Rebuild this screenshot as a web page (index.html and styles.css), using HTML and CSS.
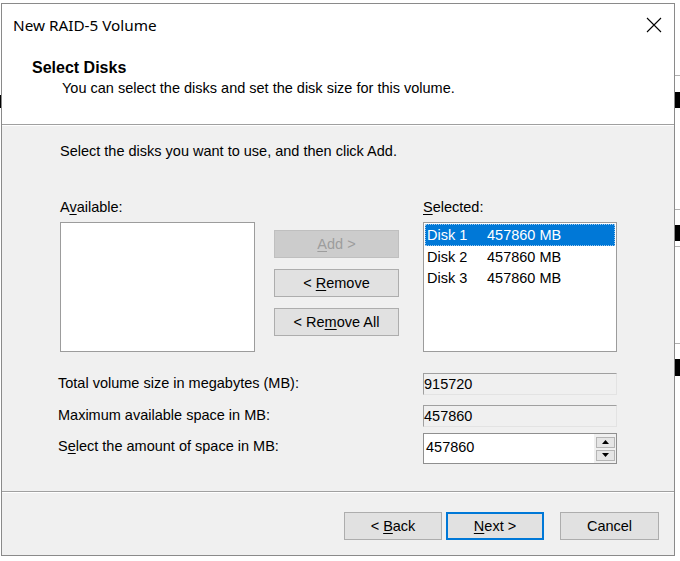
FILE: index.html
```html
<!DOCTYPE html>
<html>
<head>
<meta charset="utf-8">
<link rel="stylesheet" href="styles.css">
</head>
<body>
<div class="backdrop">
  <span class="mark mark-l1"></span>
  <span class="mark mark-r1"></span>
  <span class="mark mark-r2"></span>
  <span class="mark mark-r3"></span>
  <span class="rule rule-r1"></span>
  <span class="rule rule-r2"></span>
  <span class="rule rule-r3"></span>
  <span class="rule rule-r4"></span>
</div>
<div class="window">
  <div class="titlebar">
    <span class="title">New RAID-5 Volume</span>
    <span class="close">
      <svg width="16" height="16" viewBox="0 0 16 16"><path d="M1 1 L15 15 M15 1 L1 15" stroke="#000" stroke-width="1.1" fill="none"/></svg>
    </span>
  </div>
  <div class="header">
    <div class="h-title">Select Disks</div>
    <div class="h-sub">You can select the disks and set the disk size for this volume.</div>
  </div>
  <div class="content">
    <div class="instr">Select the disks you want to use, and then click Add.</div>
    <div class="picker">
      <div class="col col-list">
        <div class="lbl">A<u>v</u>ailable:</div>
        <div class="listbox"></div>
      </div>
      <div class="col col-btns">
        <div class="btn btn-disabled"><span><u>A</u>dd &gt;</span></div>
        <div class="btn"><span>&lt; <u>R</u>emove</span></div>
        <div class="btn"><span>&lt; Re<u>m</u>ove All</span></div>
      </div>
      <div class="col col-list">
        <div class="lbl"><u>S</u>elected:</div>
        <div class="listbox">
          <div class="item item-sel"><span class="disk">Disk 1</span><span>457860 MB</span></div>
          <div class="item"><span class="disk">Disk 2</span><span>457860 MB</span></div>
          <div class="item"><span class="disk">Disk 3</span><span>457860 MB</span></div>
        </div>
      </div>
    </div>
    <div class="fields">
      <div class="frow frow-1">
        <span class="flabel">Total volume size in megabytes (MB):</span>
        <span class="ro">915720</span>
      </div>
      <div class="frow frow-2">
        <span class="flabel">Maximum available space in MB:</span>
        <span class="ro">457860</span>
      </div>
      <div class="frow frow-3">
        <span class="flabel">S<u>e</u>lect the amount of space in MB:</span>
        <span class="spin">
          <span class="spin-input">457860</span>
          <span class="spin-btns">
            <span class="sbtn"><svg width="7" height="4" viewBox="0 0 7 4"><path d="M3.5 0 L7 4 L0 4 Z" fill="#000"/></svg></span>
            <span class="sbtn"><svg width="7" height="4" viewBox="0 0 7 4"><path d="M0 0 L7 0 L3.5 4 Z" fill="#000"/></svg></span>
          </span>
        </span>
      </div>
    </div>
  </div>
  <div class="footer">
    <div class="btn fbtn"><span>&lt; <u>B</u>ack</span></div>
    <div class="btn fbtn btn-default"><span><u>N</u>ext &gt;</span></div>
    <div class="btn fbtn btn-cancel"><span>Cancel</span></div>
  </div>
</div>
</body>
</html>
```
FILE: styles.css
```css
* { box-sizing: border-box; }
html, body { margin: 0; padding: 0; }
body {
  width: 680px;
  height: 561px;
  background: #ffffff;
  overflow: hidden;
  position: relative;
  font-family: "Liberation Sans", Arial, sans-serif;
  font-size: 14.5px;
  color: #000;
}
u { text-decoration: underline; text-underline-offset: 2px; text-decoration-thickness: 1px; }

.backdrop { position: absolute; inset: 0; }
.mark { position: absolute; background: #000; }
.mark-l1 { left: 0; top: 95px; width: 1px; height: 13px; }
.mark-r1 { left: 675px; top: 92px; width: 5px; height: 16px; }
.mark-r2 { left: 675px; top: 225px; width: 5px; height: 16px; }
.mark-r3 { left: 675px; top: 359px; width: 5px; height: 17px; }
.rule { position: absolute; left: 675px; width: 5px; height: 1px; background: #b0b0b0; }
.rule-r1 { top: 75px; }
.rule-r2 { top: 209px; }
.rule-r3 { top: 246px; }
.rule-r4 { top: 343px; }

.window {
  position: relative;
  margin: 3px 0 0 1px;
  width: 674px;
  height: 553px;
  border: 1px solid #8a8a8a;
  background: #f0f0f0;
  display: flex;
  flex-direction: column;
}

.titlebar {
  height: 42px;
  background: #fff;
  display: flex;
  align-items: center;
  justify-content: space-between;
  padding: 0 12px 0 11px;
}
.title {
  font-family: "Noto Sans", "Open Sans", sans-serif;
  font-size: 15.3px;
  color: #000;
  margin-top: -1px;
}
.close { width: 16px; height: 16px; display: flex; margin-top: -1px; }

.header {
  height: 79px;
  background: #fff;
  border-bottom: 1px solid #a0a0a0;
  padding: 12px 0 0 30px;
}
.h-title {
  font-weight: bold;
  font-size: 16px;
  line-height: 19px;
}
.h-sub {
  margin: 3px 0 0 30px;
  line-height: 17px;
}

.content {
  flex: 1;
  border-top: 1px solid #fff;
  padding: 17px 0 0 56px;
}
.instr { line-height: 17px; padding-left: 2px; }

.picker {
  display: flex;
  margin-top: 39px;
  padding-left: 2px;
}
.col-list { display: flex; flex-direction: column; }
.col-list:first-child { width: 195px; }
.col-list:last-child { width: 194px; }
.lbl { line-height: 17px; margin-bottom: 6px; }
.listbox {
  height: 130px;
  background: #fff;
  border: 1px solid #9c9c9c;
  padding: 1px;
}
.col-btns {
  width: 125px;
  margin: 0 24px 0 19px;
  padding-top: 31px;
  display: flex;
  flex-direction: column;
  gap: 11px;
}
.btn {
  height: 28px;
  background: #e1e1e1;
  border: 1px solid #adadad;
  display: flex;
  align-items: center;
  justify-content: center;
  line-height: 17px;
  white-space: pre;
}
.btn-disabled {
  background: #cccccc;
  border-color: #bfbfbf;
  color: #9d9d9d;
}
.item {
  height: 21.5px;
  display: flex;
  align-items: center;
  padding-left: 2px;
  white-space: nowrap;
}
.item-sel {
  height: 22px;
  background: #0078d7;
  color: #fff;
  outline: 1px dotted #9cc8ee;
  outline-offset: -1px;
}
.disk { width: 60px; }

.fields { margin-top: 21px; display: flex; flex-direction: column; }
.frow { display: flex; align-items: center; }
.frow-2 { margin-top: 10px; }
.frow-3 { margin-top: 6px; }
.flabel { width: 365px; padding-left: 0; line-height: 17px; margin-top: -2px; }
.frow-3 .flabel { margin-top: -4px; }
.ro {
  width: 194px;
  height: 22px;
  border-top: 1px solid #a0a0a0;
  border-left: 1px solid #a0a0a0;
  border-right: 1px solid #e3e3e3;
  border-bottom: 1px solid #e3e3e3;
  padding-left: 0;
  display: flex;
  align-items: center;
  line-height: 17px;
}
.spin {
  width: 194px;
  height: 31px;
  border: 1px solid #8f8f8f;
  background: #f0f0f0;
  display: flex;
}
.spin-input {
  width: 170px;
  background: #fff;
  display: flex;
  align-items: center;
  padding: 0 0 3px 2px;
}
.spin-btns {
  flex: 1;
  display: flex;
  flex-direction: column;
  justify-content: center;
  gap: 2px;
  padding: 0 1px 0 2px;
}
.sbtn {
  height: 11px;
  background: #e5e5e5;
  border: 1px solid #b5b5b5;
  display: flex;
  align-items: center;
  justify-content: center;
}

.footer {
  height: 64px;
  border-top: 1px solid #a0a0a0;
  box-shadow: inset 0 1px 0 #fff;
  display: flex;
  justify-content: flex-end;
  align-items: flex-start;
  padding: 20px 15px 0 0;
}
.fbtn { width: 98px; }
.fbtn + .fbtn { margin-left: 4px; }
.btn-default { border: 2px solid #0078d7; }
.btn-cancel { width: 99px; margin-left: 16px !important; }
```
